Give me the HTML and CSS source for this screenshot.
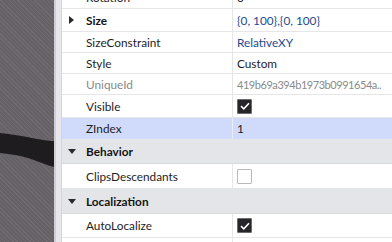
FILE: index.html
```html
<!DOCTYPE html>
<html>
<head>
<meta charset="utf-8">
<link rel="stylesheet" href="styles.css">
</head>
<body>
<div class="app">
  <div class="viewport">
    <svg class="shadow" width="54" height="242" viewBox="0 0 54 242">
      <path d="M0 133 C12 134 22 136 32 138 C42 140 48 141 54 141 L54 167 C46 165 38 161 28 158 C18 155 8 154 0 153 Z" fill="#1f1c20"/>
    </svg>
  </div>
  <div class="gutter"><div class="gutter-inner"></div></div>
  <div class="panel">
    <div class="row prop r22 top-cut">
      <div class="name"><span class="arrow-slot"></span>Rotation</div>
      <div class="value">0</div>
    </div>
    <div class="row prop r23">
      <div class="name bold"><span class="arrow-slot"><span class="tri-right"></span></span>Size</div>
      <div class="value blue">{0, 100},{0, 100}</div>
    </div>
    <div class="row prop r21">
      <div class="name"><span class="arrow-slot"></span>SizeConstraint</div>
      <div class="value blue">RelativeXY</div>
    </div>
    <div class="row prop r21">
      <div class="name"><span class="arrow-slot"></span>Style</div>
      <div class="value">Custom</div>
    </div>
    <div class="row prop r21">
      <div class="name grey"><span class="arrow-slot"></span>UniqueId</div>
      <div class="value grey id">419b69a394b1973b0991654a..</div>
    </div>
    <div class="row prop r23">
      <div class="name"><span class="arrow-slot"></span>Visible</div>
      <div class="value"><span class="check on"><svg width="10" height="8" viewBox="0 0 10 8"><path d="M1 4.2 L3.8 6.8 L9 1.2" fill="none" stroke="#fff" stroke-width="1.6"/></svg></span></div>
    </div>
    <div class="row prop r22 selected">
      <div class="name"><span class="arrow-slot"></span>ZIndex</div>
      <div class="value">1</div>
    </div>
    <div class="row cat r24">
      <div class="name bold"><span class="arrow-slot"><span class="tri-down"></span></span>Behavior</div>
    </div>
    <div class="row prop r25">
      <div class="name"><span class="arrow-slot"></span>ClipsDescendants</div>
      <div class="value"><span class="check off"></span></div>
    </div>
    <div class="row cat r25">
      <div class="name bold"><span class="arrow-slot"><span class="tri-down"></span></span>Localization</div>
    </div>
    <div class="row prop r24">
      <div class="name"><span class="arrow-slot"></span>AutoLocalize</div>
      <div class="value"><span class="check on"><svg width="10" height="8" viewBox="0 0 10 8"><path d="M1 4.2 L3.8 6.8 L9 1.2" fill="none" stroke="#fff" stroke-width="1.6"/></svg></span></div>
    </div>
    <div class="row prop r22">
      <div class="name"><span class="arrow-slot"></span></div>
      <div class="value"></div>
    </div>
  </div>
</div>
</body>
</html>
```

FILE: styles.css
```css
html, body {
  margin: 0;
  padding: 0;
  width: 392px;
  height: 242px;
  overflow: hidden;
  background: #ffffff;
}
.app {
  display: flex;
  width: 392px;
  height: 242px;
  font-family: Lato, "Noto Sans", sans-serif;
  font-size: 11.8px;
  color: #1e1e1e;
}
.viewport {
  width: 54px;
  height: 242px;
  flex: none;
  background-color: #69656a;
  background-image: repeating-linear-gradient(45deg, rgba(255,255,255,0.04) 0 1px, rgba(0,0,0,0.04) 1px 3px);
}
.shadow { display: block; }
.gutter {
  width: 8px;
  flex: none;
  background: #cfcfd5;
  display: flex;
  justify-content: flex-end;
  border-right: 1px solid #d6d6d8;
  box-sizing: border-box;
}
.gutter-inner {
  width: 5px;
  background: #e7e7eb;
}
.panel {
  flex: 1;
  display: flex;
  flex-direction: column;
  overflow: hidden;
}
.row {
  display: grid;
  grid-template-columns: 170px 1fr;
  align-items: center;
  box-sizing: border-box;
  border-bottom: 1px solid #e6e6e6;
  flex: none;
}
.r21 { height: 21px; }
.r22 { height: 22px; }
.r23 { height: 23px; }
.r24 { height: 24px; }
.r25 { height: 25px; }
.top-cut { margin-top: -13px; }
.name {
  display: flex;
  align-items: center;
  padding-left: 7px;
  white-space: nowrap;
  height: 100%;
}
.arrow-slot {
  width: 17px;
  display: flex;
  align-items: center;
  flex: none;
}
.value {
  height: 100%;
  display: flex;
  align-items: center;
  border-left: 1px solid #e6e6e6;
  padding-left: 4px;
  white-space: nowrap;
  overflow: hidden;
}
.bold { font-weight: 700; color: #141414; }
.grey { color: #8a8a8a; }
.blue { color: #1d4a8f; }
.id {
  font-size: 11px;
  letter-spacing: -0.45px;
}
.selected { background: #d0dbfc; }
.selected .value { border-left-color: #e9eefc; }
.cat {
  background: #e4e5e8;
  border-bottom-color: #d9dadd;
  grid-template-columns: 1fr;
}
.tri-right {
  width: 0;
  height: 0;
  border-top: 4px solid transparent;
  border-bottom: 4px solid transparent;
  border-left: 5px solid #2a2a2a;
}
.tri-down {
  width: 0;
  height: 0;
  margin-left: -1px;
  border-left: 4px solid transparent;
  border-right: 4px solid transparent;
  border-top: 5px solid #2a2a2a;
}
.check {
  width: 15px;
  height: 15px;
  box-sizing: border-box;
  display: flex;
  align-items: center;
  justify-content: center;
  border-radius: 1px;
}
.check.on {
  background: #25252a;
  border: 1px solid #6c6c70;
}
.check.off {
  background: #ffffff;
  border: 1px solid #b9b9be;
}
```
